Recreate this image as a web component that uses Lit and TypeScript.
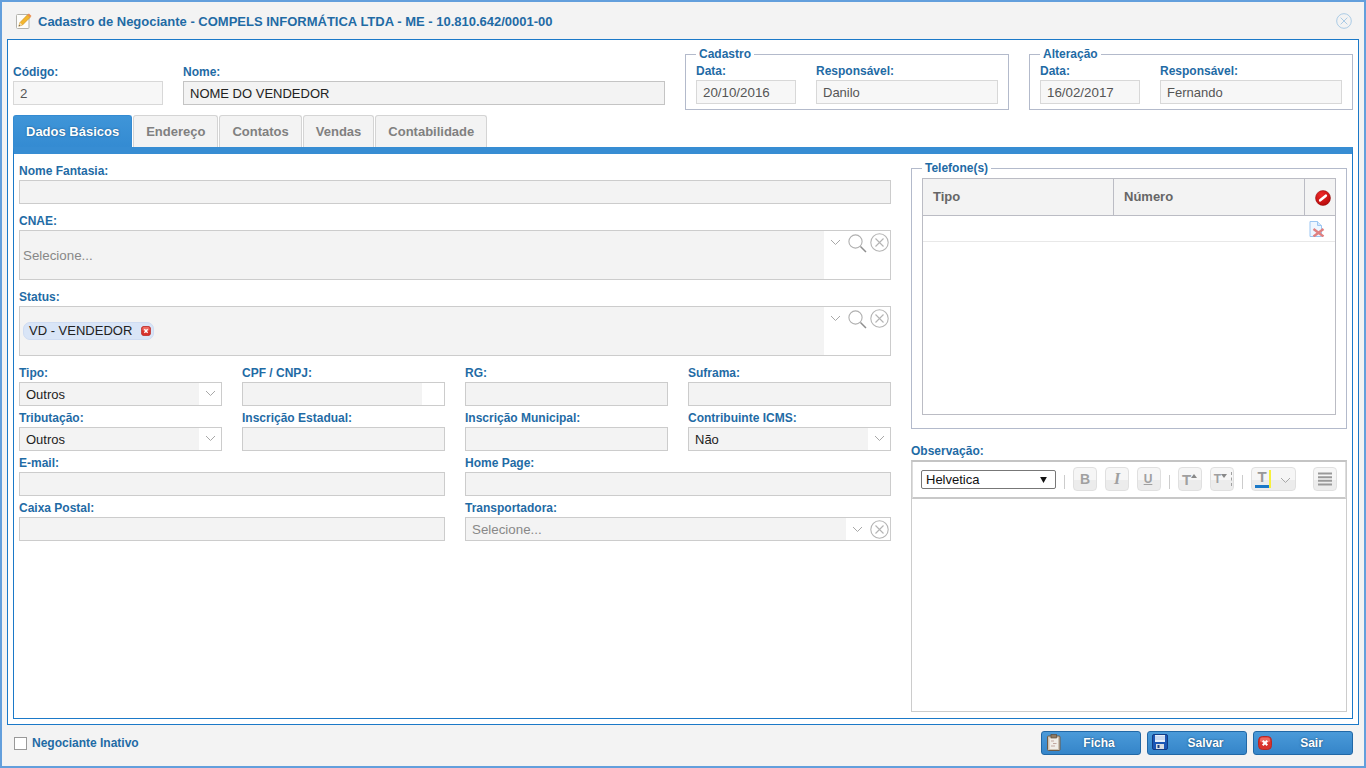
import { LitElement, html, css } from "lit";
import { customElement } from "lit/decorators.js";

const chevron = (w = 11) => html`<svg class="chev" width=${w} height="7" viewBox="0 0 11 7"><path d="M1 1l4.5 4.5L10 1" fill="none" stroke="#a8a8a8" stroke-width="1"/></svg>`;
const circleX = (s = 19, c = "#b4b4b4") => html`<svg width=${s} height=${s} viewBox="0 0 19 19"><circle cx="9.5" cy="9.5" r="8.700" fill="none" stroke=${c} stroke-width="1.100"/><path d="M5.500 5.500l8 8M13.500 5.500l-8 8" stroke=${c} stroke-width="1.100"/></svg>`;
const lens = html`<svg width="19" height="19" viewBox="0 0 19 19"><circle cx="7.500" cy="7.500" r="6.600" fill="none" stroke="#b0b0b0" stroke-width="1.100"/><path d="M12.500 12.500l5.500 5.500" stroke="#8e8e8e" stroke-width="1.500"/></svg>`;
const redSquare = (s: number) => html`<svg width=${s} height=${s} viewBox="0 0 14 14"><rect x="0.500" y="0.500" width="13" height="13" rx="4" fill="#d8322c" stroke="#b52a28"/><rect x="2" y="1.500" width="10" height="5" rx="2" fill="#ee6a62"/><path d="M4.700 4.700l4.600 4.600M9.300 4.700l-4.600 4.600" stroke="#fff" stroke-width="2"/></svg>`;

@customElement("app-root")
export class AppRoot extends LitElement {
  static styles = css`
    :host { display: flex; flex-direction: column; box-sizing: border-box; width: 1366px; height: 768px; border: 2px solid #639fdc; background: #f3f3f3; font-family: "Liberation Sans", Arial, sans-serif; font-size: 13px; color: #222; overflow: hidden; }
    * { box-sizing: border-box; }
    svg { display: block; flex: none; }
    .title { height: 37px; flex: none; display: flex; align-items: center; padding: 1px 12px 0 14px; color: #1f6ba5; font-weight: bold; font-size: 13px; }
    .title .txt { margin-left: 6px; flex: 1; }
    .main { height: 686px; flex: none; margin: 0 5px; border: 1px solid #1b79c8; background: #fff; padding: 0 5px; display: flex; flex-direction: column; }
    .head { height: 75px; flex: none; display: flex; gap: 20px; }
    .head > .field { margin-top: 20px; }
    .cod { width: 150px; }
    .nome { width: 482px; }
    .field { display: flex; flex-direction: column; min-width: 0; }
    label, .lab { display: block; height: 21px; padding-top: 5px; line-height: 14px; font-size: 12px; font-weight: bold; color: #1f6ba5; white-space: nowrap; flex: none; }
    .in { height: 24px; border: 1px solid #ccc; background: #f3f3f3; padding: 0 6px; display: flex; align-items: center; font-size: 13px; color: #222; overflow: hidden; flex: none; }
    .ro { background: #f7f7f7; border-color: #d8d8d8; color: #555; font-size: 13px; }
    .ro.big { font-size: 13.330px; }
    .dark { border-color: #c4c4c4; }
    fieldset { margin: 0; padding: 0 10px; border: 1px solid #b3bacb; min-width: 0; }
    legend { padding: 0 3px; font-size: 12px; font-weight: bold; color: #1f6ba5; line-height: 14px; height: 14px; }
    .aud { margin-top: 7px; width: 324px; height: 63px; }
    .aud .row { display: flex; gap: 20px; }
    .aud .lab2 { display: block; height: 19px; padding-top: 3px; line-height: 14px; font-size: 12px; font-weight: bold; color: #1f6ba5; }
    .aud .d { width: 100px; }
    .aud .r { width: 182px; }
    .tabs { display: flex; gap: 1px; height: 32px; flex: none; }
    .tab { height: 32px; padding: 0 12px; border: 1px solid #d4d4d4; border-bottom: 0; border-radius: 3px 3px 0 0; background: #f3f3f3; color: #808080; font-weight: bold; font-size: 13px; display: flex; align-items: center; }
    .tab.on { background: linear-gradient(#3f95d8, #348bd2); border-color: #348bd2; color: #fff; text-shadow: 0 0 2px #14507f; }
    .panel { height: 572px; flex: none; border: 1px solid #1b79c8; border-top: 7px solid #378dd3; display: grid; grid-template-columns: 872px 436px; gap: 20px; padding: 0 5px; }
    .left { padding-top: 5px; display: flex; flex-direction: column; }
    .left > .field + .field { margin-top: 5px; }
    .tall { height: 50px; padding: 0; align-items: stretch; background: #fff; }
    .grey { flex: 1; background: #f3f3f3; display: flex; align-items: center; min-width: 0; }
    .ph { color: #888; padding-left: 3px; font-size: 13.330px; }
    .tools { width: 66px; flex: none; display: flex; padding: 2px 0 0 6px; align-items: flex-start; }
    .tools .chev { margin: 6px 3px 0 0; }
    .tools .lensw { margin: 1px 3px 0 4px; }
    .tag { margin-left: 3px; height: 18px; width: 131px; border: 1px solid #cfdcf2; background: #d9e5f7; border-radius: 7px; display: flex; align-items: center; justify-content: space-between; padding: 0 2px 1px 5px; white-space: nowrap; font-size: 13px; }
    .tag svg { margin-top: 1px; }
    .grid4 { display: grid; grid-template-columns: repeat(4, 203px); column-gap: 20px; margin-top: 5px; }
    .span2 { grid-column: span 2; }
    .c2 { grid-column: 3 / span 2; }
    .sel { padding: 0; background: #fff; align-items: stretch; }
    .sel .grey { padding-left: 6px; }
    .sel .end { width: 22px; flex: none; display: flex; align-items: center; justify-content: center; padding-bottom: 1px; }
    .sel .blank { width: 22px; flex: none; }
    .trans .end2 { width: 44px; flex: none; display: flex; align-items: center; padding-left: 6px; gap: 7px; }
    .trans .ph2 { color: #888; font-size: 13.330px; }
    .right { padding-top: 7px; display: flex; flex-direction: column; }
    .tel { height: 268px; padding: 3px 10px 13px; flex: none; }
    .tbl { height: 237px; border: 1px solid #bbbcc4; }
    .thead { height: 37px; display: grid; grid-template-columns: 191px 191px 1fr; background: #f3f3f3; border-bottom: 1px solid #bbbcc4; color: #666; font-weight: bold; font-size: 13px; }
    .thead > div { display: flex; align-items: center; padding: 0 0 2px 10px; border-right: 1px solid #bbbcc4; }
    .thead > div:last-child { border-right: 0; padding: 1px 0 0 10px; }
    .trow { height: 26px; border-bottom: 1px solid #e8e8e8; display: flex; justify-content: flex-end; padding: 5px 10px 0 0; }
    .obs { margin-top: 10px; }
    .editor { height: 252px; border: 1px solid #ccc; border-top: 2px solid #c4c4c4; }
    .bar { height: 37px; border-bottom: 2px solid #c8c8c8; border-left: 1px solid #ddd; border-right: 1px solid #ddd; display: flex; align-items: flex-start; padding: 5px 0 0 8px; }
    .fontsel { width: 135px; height: 19px; margin-top: 3px; border: 1px solid #777; border-radius: 2px; background: #fff; font-size: 13px; color: #111; display: flex; align-items: center; justify-content: space-between; padding: 0 8px 0 4px; }
    .sep { width: 1px; height: 14px; background: #ccc; margin: 8px 8px 0; flex: none; }
    .tb { position: relative; width: 24px; height: 24px; border: 1px solid #e0e0e0; border-radius: 4px; background: linear-gradient(#f6f6f6 0 55%, #ececec 55% 100%); color: #a0a0a0; display: flex; align-items: center; justify-content: center; font-weight: bold; font-size: 14px; flex: none; }
    .tb + .tb { margin-left: 8px; }
    .tb.i { font-family: "Liberation Serif", serif; font-style: italic; font-size: 16px; }
    .tb.u { text-decoration: underline; font-size: 12px; padding-right: 2px; }
    .tb.up { font-size: 15px; padding-right: 1px; }
    .tb.up svg { margin: -6px 0 0 0; }
    .tb.sm { font-size: 12px; padding-right: 3px; }
    .tb.sm svg { margin-top: -6px; }
    .tb.sm::after { content: ""; position: absolute; right: 1px; top: 4px; height: 14px; border-right: 1px dashed #a0a0a0; }
    .tb.col { width: 45px; justify-content: flex-start; padding-left: 3px; align-items: flex-start; }
    .tcol { width: 14px; height: 18px; margin-top: 2px; line-height: 14px; text-align: center; color: #999; font-size: 15px; border-bottom: 3px solid #1b79c8; }
    .ybar { width: 2px; height: 18px; margin-top: 2px; background: #f7f03c; margin-right: 9px; }
    .tb.col .chev { margin-top: 9px; }
    .tb.list { margin-left: 17px; }
    .foot { flex: 1; display: flex; padding: 6px 11px 0 12px; align-items: flex-start; }
    .chk { width: 13px; height: 13px; border: 1px solid #999; background: #fff; margin-top: 6px; flex: none; }
    .cl { margin: 5px 0 0 5px; font-size: 12px; font-weight: bold; color: #1f6ba5; line-height: 14px; flex: 1; }
    .btn { width: 100px; height: 24px; margin-left: 6px; border: 1px solid #2168a6; border-radius: 3px; background: linear-gradient(#4a9ad9, #3585c9); color: #fff; font-weight: bold; font-size: 12px; text-shadow: 0 0 2px #123f66; display: flex; align-items: center; padding-left: 4px; }
    .btn span { flex: 1; text-align: center; padding-right: 3px; }
    .btn .sair { padding-left: 2px; }
    .ic-f { margin: -2px 0 0 1px; }
    .ic-s { margin-top: -3px; }
  `;

  private f(labelText: string, cls = "") {
    return html`<div class="field ${cls}"><label>${labelText}</label><div class="in"></div></div>`;
  }

  private sel(labelText: string, value: string) {
    return html`<div class="field"><label>${labelText}</label><div class="in sel"><div class="grey">${value}</div><div class="end">${chevron()}</div></div></div>`;
  }

  private big(labelText: string, content: unknown) {
    return html`<div class="field"><label>${labelText}</label><div class="in tall"><div class="grey">${content}</div><div class="tools">${chevron()}<span class="lensw">${lens}</span>${circleX()}</div></div></div>`;
  }

  private aud(legendText: string, d: string, r: string) {
    return html`<fieldset class="aud"><legend>${legendText}</legend><div class="row">
      <div class="d"><span class="lab2">Data:</span><div class="in ro big">${d}</div></div>
      <div class="r"><span class="lab2">Responsável:</span><div class="in ro">${r}</div></div>
    </div></fieldset>`;
  }

  render() {
    return html`
      <div class="title">
        <svg width="16" height="16" viewBox="0 0 16 16"><rect x=".5" y="1.500" width="12.500" height="14" rx="1" fill="#fdfdfb" stroke="#b3b3ad"/><path d="M2.800 13.200l1.200-3.700 7.500-7.700 2.700 2.500-7.700 7.700z" fill="#f4b72e" stroke="#c88a1a" stroke-width=".6"/><path d="M2.800 13.200l1.200-3.700 2.500 2.500z" fill="#f3dcae"/><path d="M2.800 13.200l.5-1.500 1 1z" fill="#555"/><path d="M11.500 1.800l2.700 2.500 1.300-1.400-2.600-2.500z" fill="#ec8c50"/></svg>
        <div class="txt">Cadastro de Negociante - COMPELS INFORMÁTICA LTDA - ME - 10.810.642/0001-00</div>
        ${circleX(16, "#a5c8e4")}
      </div>
      <div class="main">
        <div class="head">
          <div class="field cod"><label>Código:</label><div class="in ro big">2</div></div>
          <div class="field nome"><label>Nome:</label><div class="in dark">NOME DO VENDEDOR</div></div>
          ${this.aud("Cadastro", "20/10/2016", "Danilo")}
          ${this.aud("Alteração", "16/02/2017", "Fernando")}
        </div>
        <div class="tabs">
          <div class="tab on">Dados Básicos</div>
          <div class="tab">Endereço</div>
          <div class="tab">Contatos</div>
          <div class="tab">Vendas</div>
          <div class="tab">Contabilidade</div>
        </div>
        <div class="panel">
          <div class="left">
            ${this.f("Nome Fantasia:")}
            ${this.big("CNAE:", html`<span class="ph">Selecione...</span>`)}
            ${this.big("Status:", html`<span class="tag">VD - VENDEDOR ${redSquare(10)}</span>`)}
            <div class="grid4">
              ${this.sel("Tipo:", "Outros")}
              <div class="field"><label>CPF / CNPJ:</label><div class="in sel"><div class="grey"></div><div class="blank"></div></div></div>
              ${this.f("RG:")}
              ${this.f("Suframa:")}
              ${this.sel("Tributação:", "Outros")}
              ${this.f("Inscrição Estadual:")}
              ${this.f("Inscrição Municipal:")}
              ${this.sel("Contribuinte ICMS:", "Não")}
              ${this.f("E-mail:", "span2")}
              ${this.f("Home Page:", "c2")}
              ${this.f("Caixa Postal:", "span2")}
              <div class="field c2 trans"><label>Transportadora:</label><div class="in sel"><div class="grey ph2">Selecione...</div><div class="end2">${chevron()}${circleX()}</div></div></div>
            </div>
          </div>
          <div class="right">
            <fieldset class="tel"><legend>Telefone(s)</legend>
              <div class="tbl">
                <div class="thead"><div>Tipo</div><div>Número</div><div>
                  <svg width="16" height="16" viewBox="0 0 16 16"><defs><radialGradient id="rg" cx=".4" cy=".3" r=".8"><stop offset="0" stop-color="#f02a2a"/><stop offset="1" stop-color="#b00606"/></radialGradient></defs><circle cx="8" cy="8" r="7.500" fill="url(#rg)" stroke="#8d0808" stroke-width=".5"/><path d="M5.200 10.300l5.600-4.600" stroke="#fff" stroke-width="2.600" stroke-linecap="round"/></svg>
                </div></div>
                <div class="trow"><svg width="16" height="16" viewBox="0 0 16 16"><path d="M1 .5h7.500l4 4v11H1z" fill="#eef6ff" stroke="#9cc6f2"/><path d="M8.500 .5v4h4" fill="#d4e6fa" stroke="#9cc6f2"/><path d="M4.500 8l10 7.500M14.500 8l-10 7.500" stroke="#e08080" stroke-width="2.400"/></svg></div>
              </div>
            </fieldset>
            <div class="obs">
              <label>Observação:</label>
              <div class="editor">
                <div class="bar">
                  <div class="fontsel">Helvetica<svg width="7" height="6" viewBox="0 0 9 8"><path d="M0 0h9L4.500 8z" fill="#111"/></svg></div>
                  <div class="sep"></div>
                  <div class="tb">B</div><div class="tb i">I</div><div class="tb u">U</div>
                  <div class="sep"></div>
                  <div class="tb up">T<svg width="6" height="4" viewBox="0 0 6 4"><path d="M0 4h6L3 0z" fill="#888"/></svg></div><div class="tb sm">T<svg width="6" height="4" viewBox="0 0 6 4"><path d="M0 0h6L3 4z" fill="#888"/></svg></div>
                  <div class="sep"></div>
                  <div class="tb col"><div class="tcol">T</div><div class="ybar"></div>${chevron()}</div>
                  <div class="tb list"><svg width="16" height="14" viewBox="0 0 16 14"><path d="M1 1.500h14M1 5.200h14M1 8.800h14M1 12.500h14" stroke="#999" stroke-width="2"/></svg></div>
                </div>
              </div>
            </div>
          </div>
        </div>
      </div>
      <div class="foot">
        <div class="chk"></div>
        <div class="cl">Negociante Inativo</div>
        <div class="btn"><svg class="ic-f" width="14" height="17" viewBox="0 0 14 17"><rect x=".5" y="2" width="12.500" height="14.500" rx="1" fill="#cfc3b2" stroke="#6e5b46"/><rect x="2.500" y="4" width="8.500" height="11" fill="#f1eee8"/><rect x="4" y="0.500" width="5.500" height="3.500" fill="#8d7a63" stroke="#5e4d3b" stroke-width=".7"/><path d="M4 7h3M6 9.500h3.500M4 12h4" stroke="#c2a8a0"/></svg><span>Ficha</span></div>
        <div class="btn"><svg class="ic-s" width="16" height="16" viewBox="0 0 16 16"><rect x=".5" y=".5" width="15" height="15" rx="1.500" fill="#1b56b5" stroke="#133d85"/><rect x="3" y="1" width="10" height="7" fill="#e6eefa"/><path d="M3 3h10M3 5h10" stroke="#9fb9e2" stroke-width=".8"/><rect x="4" y="10" width="8" height="5" fill="#d9dde3"/><rect x="5.500" y="11" width="2" height="3" fill="#1b3f7e"/></svg><span>Salvar</span></div>
        <div class="btn">${redSquare(14)}<span class="sair">Sair</span></div>
      </div>
    `;
  }
}
